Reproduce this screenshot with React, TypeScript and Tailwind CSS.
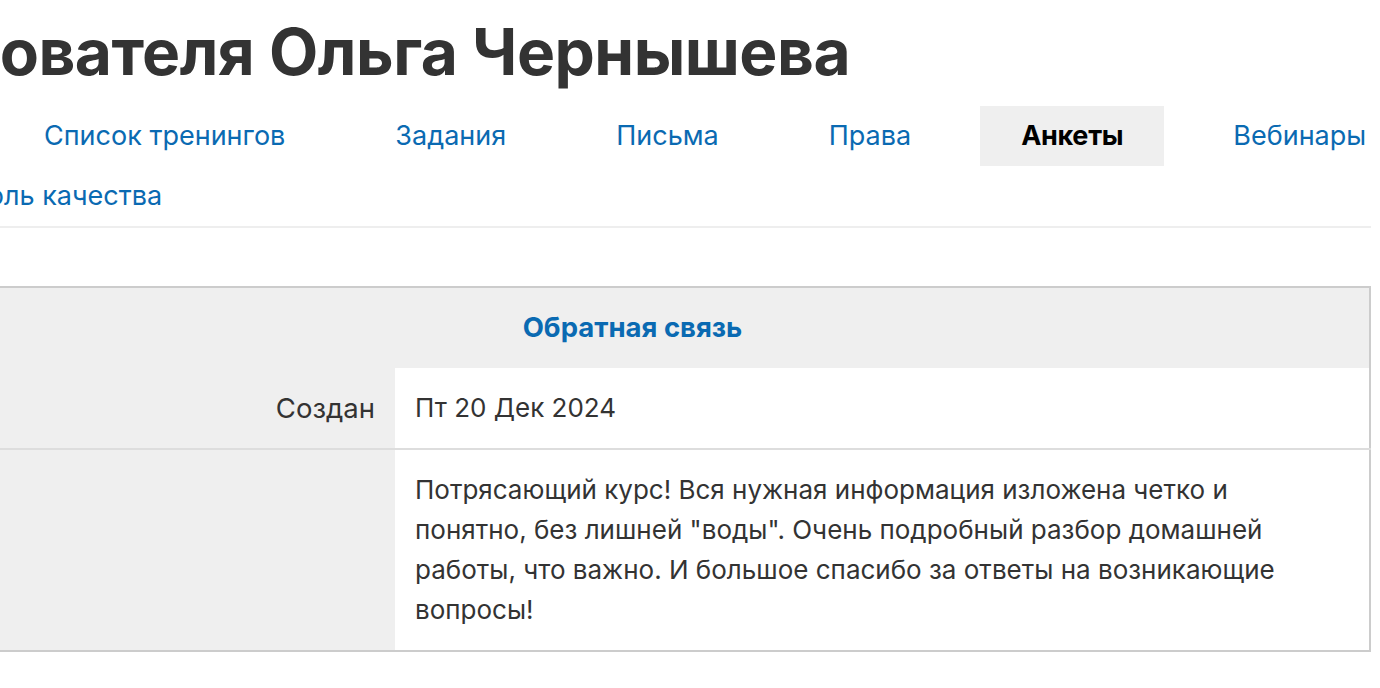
import { ArrowLeft } from 'lucide-react';

const tabs = [
  { label: 'Список тренингов' },
  { label: 'Задания' },
  { label: 'Письма' },
  { label: 'Права' },
  { label: 'Анкеты', active: true },
  { label: 'Вебинары' },
  { label: 'Контроль качества' },
];

const feedback =
  'Потрясающий курс! Вся нужная информация изложена четко и понятно, без лишней "воды". Очень подробный разбор домашней работы, что важно. И большое спасибо за ответы на возникающие вопросы!';

export default function App() {
  return (
    <div
      className="w-[1380px] h-[688px] overflow-hidden bg-white text-[#333]"
      style={{ fontFamily: 'Inter, "Noto Sans", sans-serif' }}
    >
      <div className="-ml-[106px] w-[1477px]">
        <h1 className="-ml-[338px] pt-[14px] text-[64px] font-bold leading-[76px] whitespace-nowrap tracking-[-0.5px]">
          Анкеты пользователя Ольга Чернышева
        </h1>

        <nav className="-ml-[26px] mt-[16px] border-b-2 border-[#eeeeee]">
          <ul className="flex flex-wrap gap-x-[28px] w-[1620px] text-[27px]">
            <li className="h-[60px] w-[107px] flex items-center justify-center text-[#0a6ab2]">
              <ArrowLeft size={26} />
            </li>
            {tabs.map((tab) => (
              <li
                key={tab.label}
                className={
                  tab.active
                    ? 'h-[60px] px-[41px] flex items-center bg-[#efefef] text-black font-bold tracking-[-0.3px]'
                    : 'h-[60px] px-[41px] flex items-center text-[#0a6ab2]'
                }
              >
                {tab.label}
              </li>
            ))}
          </ul>
        </nav>

        <table className="mt-[58px] w-full border-collapse border-2 border-[#cccccc] text-[26px]">
          <thead>
            <tr className="bg-[#efefef]">
              <th
                colSpan={2}
                className="h-[81px] text-center font-bold text-[27.5px] text-[#0a6ab2]"
              >
                Обратная связь
              </th>
            </tr>
          </thead>
          <tbody>
            <tr className="border-b-2 border-[#dddddd]">
              <td className="w-[500px] bg-[#efefef] px-[20px] py-[20px] text-right align-top leading-[40px] text-[27.5px]">
                Создан
              </td>
              <td className="bg-white pl-[20px] pr-[40px] py-[20px] leading-[40px]">
                Пт 20 Дек 2024
              </td>
            </tr>
            <tr>
              <td className="bg-[#efefef]" />
              <td className="bg-white pl-[20px] pr-[40px] py-[20px] leading-[40px]">
                {feedback}
              </td>
            </tr>
          </tbody>
        </table>
      </div>
    </div>
  );
}
